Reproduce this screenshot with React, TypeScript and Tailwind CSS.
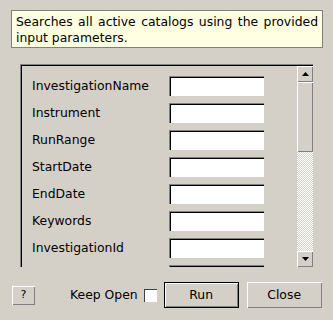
const fields = [
  "InvestigationName",
  "Instrument",
  "RunRange",
  "StartDate",
  "EndDate",
  "Keywords",
  "InvestigationId",
  "DataFileName",
];

function Field({ label }: { label: string }) {
  return (
    <div className="flex items-center h-[20px] shrink-0">
      <span className="w-[147px] shrink-0 pl-[10px] whitespace-nowrap">{label}</span>
      <div className="w-[95px] h-[20px] shrink-0 border-t border-l border-[#808080] border-b-white border-r-white">
        <div className="h-full w-full bg-white border-t border-l border-[#000] border-b-[#d4d0c8] border-r-[#d4d0c8]" />
      </div>
    </div>
  );
}

function Raised({ className, children }: { className?: string; children?: React.ReactNode }) {
  return (
    <div className={"border-t border-l border-white border-b-[#404040] border-r-[#404040] " + (className ?? "")}>
      <div className="h-full w-full flex items-center justify-center border-b border-r border-[#808080] border-t-transparent border-l-transparent">
        {children}
      </div>
    </div>
  );
}

export default function App() {
  return (
    <div className="w-[333px] h-[320px] bg-[#d4d0c8] flex flex-col text-[12.4px] text-black font-['DejaVu_Sans',sans-serif] overflow-hidden">
      {/* description */}
      <div className="mt-[10px] ml-[11px] w-[312px] h-[38px] border border-[#808080] bg-[#ffffe1] pl-[4px] pr-[4px] pt-[3px] leading-[16px] text-justify">
        Searches all active catalogs using the provided input parameters.
      </div>

      {/* parameters panel */}
      <div className="mt-[16px] ml-[20px] w-[293px] h-[203px] border-t border-l border-[#808080] border-b-white border-r-white">
        <div className="h-full w-full flex border-t border-l border-[#000] border-b-[#d4d0c8] border-r-[#d4d0c8]">
          <div className="flex-1 flex flex-col gap-[7px] pt-[10px] overflow-hidden">
            {fields.map((f) => (
              <Field key={f} label={f} />
            ))}
          </div>
          {/* scrollbar */}
          <div className="w-[16px] flex flex-col">
            <Raised className="h-[16px] w-[16px]">
              <svg width="7" height="4" viewBox="0 0 7 4">
                <path d="M3.5 0 L7 4 L0 4 Z" fill="#000" />
              </svg>
            </Raised>
            <Raised className="h-[70px] w-[16px] bg-[#d4d0c8]" />
            <div className="flex-1 bg-[repeating-conic-gradient(#ffffff_0_25%,#d4d0c8_0_50%)] bg-[length:2px_2px]" />
            <Raised className="h-[16px] w-[16px]">
              <svg width="7" height="4" viewBox="0 0 7 4">
                <path d="M0 0 L7 0 L3.5 4 Z" fill="#000" />
              </svg>
            </Raised>
          </div>
        </div>
      </div>

      {/* buttons */}
      <div className="mt-[15px] flex items-center h-[26px]">
        <Raised className="ml-[12px] w-[23px] h-[19px] text-[11px]">?</Raised>
        <span className="ml-[35px] whitespace-nowrap">Keep Open</span>
        <div className="ml-[6px] w-[13px] h-[13px] border-t border-l border-[#404040] border-b-[#d4d0c8] border-r-[#d4d0c8] bg-white" />
        <div className="ml-[7px] w-[75px] h-[26px] border border-black">
          <Raised className="h-full w-full">Run</Raised>
        </div>
        <Raised className="ml-[8px] w-[75px] h-[26px]">Close</Raised>
      </div>
    </div>
  );
}
